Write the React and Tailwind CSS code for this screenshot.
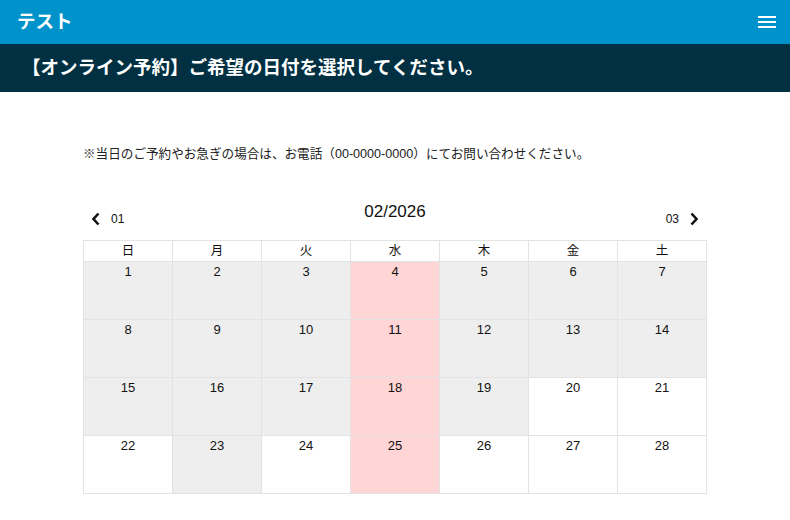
import React from "react";

const weekdays = ["日", "月", "火", "水", "木", "金", "土"];

// 2026年2月: 1日は日曜
const weeks = [
  [1, 2, 3, 4, 5, 6, 7],
  [8, 9, 10, 11, 12, 13, 14],
  [15, 16, 17, 18, 19, 20, 21],
  [22, 23, 24, 25, 26, 27, 28],
];

const closedDays = [1, 2, 3, 5, 6, 7, 8, 9, 10, 12, 13, 14, 15, 16, 17, 19, 23];

function cellClass(day, col) {
  if (col === 3) return "bg-[#ffd5d5]";
  if (closedDays.includes(day)) return "bg-[#eeeeee]";
  return "bg-white";
}

export default function App() {
  return (
    <div className="min-h-[520px] bg-white text-[#111]" style={{ fontFamily: '"Liberation Sans", "Noto Sans CJK JP", sans-serif' }}>
      {/* Header */}
      <header className="h-[44px] bg-[#0093cb] flex items-center justify-between pl-[17px] pr-[14px]">
        <div className="text-white text-[18.5px] font-bold">テスト</div>
        <button className="flex flex-col gap-[3px] w-[18px]">
          <span className="block h-[2px] w-full bg-white"></span>
          <span className="block h-[2px] w-full bg-white"></span>
          <span className="block h-[2px] w-full bg-white"></span>
        </button>
      </header>

      {/* Page title */}
      <div className="h-[48px] bg-[#003042] flex items-center pl-[22px]">
        <h1 className="text-white text-[18.5px] font-bold">【オンライン予約】ご希望の日付を選択してください。</h1>
      </div>

      <main className="w-[624px] mx-auto pt-[53px]">
        <p className="text-[12.6px] leading-[18px] text-[#222]">
          ※当日のご予約やお急ぎの場合は、お電話（00-0000-0000）にてお問い合わせください。
        </p>

        {/* Month navigation */}
        <div className="mt-[38px] h-[39px] grid grid-cols-[1fr_auto_1fr] items-start">
          <button className="justify-self-start flex items-center gap-[10px] pl-[8px] pt-[9px]">
            <svg width="10" height="14" viewBox="0 0 10 14">
              <path d="M7.5 1.5 L2.5 7 L7.5 12.5" fill="none" stroke="#111" strokeWidth="2.6" />
            </svg>
            <span className="text-[12px]">01</span>
          </button>
          <div className="text-[17px] leading-[20px] pt-[1px]">02/2026</div>
          <button className="justify-self-end flex items-center gap-[10px] pr-[8px] pt-[9px]">
            <span className="text-[12px]">03</span>
            <svg width="10" height="14" viewBox="0 0 10 14">
              <path d="M2.5 1.5 L7.5 7 L2.5 12.5" fill="none" stroke="#111" strokeWidth="2.6" />
            </svg>
          </button>
        </div>

        {/* Calendar */}
        <table className="w-full table-fixed border-collapse text-[13px]">
          <thead>
            <tr>
              {weekdays.map((w) => (
                <th key={w} className="h-[21px] border border-[#e3e3e3] font-normal text-center text-[12.5px] bg-white">
                  {w}
                </th>
              ))}
            </tr>
          </thead>
          <tbody>
            {weeks.map((week, i) => (
              <tr key={i}>
                {week.map((day, col) => (
                  <td
                    key={day}
                    className={`h-[58px] border border-[#e3e3e3] align-top text-center pt-0 ${cellClass(day, col)}`}
                  >
                    {day}
                  </td>
                ))}
              </tr>
            ))}
          </tbody>
        </table>
      </main>
    </div>
  );
}
